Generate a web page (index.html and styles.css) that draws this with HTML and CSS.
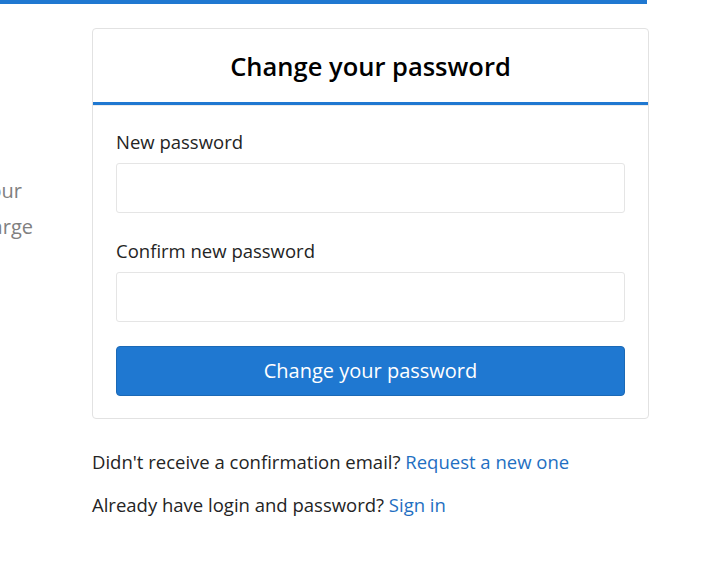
FILE: index.html
```html
<!DOCTYPE html>
<html lang="en">
<head>
    <meta charset="UTF-8">
    <meta name="viewport" content="width=device-width, initial-scale=1.0">
    <title>Change your password</title>
    <link rel="stylesheet" href="styles.css">
</head>
<body>
    <div class="topbar"></div>

    <div class="page">
        <div class="intro">
            <span class="intro-line first">Keep your</span>
            <span class="intro-line">team in charge</span>
        </div>

        <div class="main">
            <div class="card">
                <div class="card-header">
                    <h3>Change your password</h3>
                </div>
                <form class="card-body" id="passwordForm">
                    <div class="form-group">
                        <label for="password">New password</label>
                        <input type="password" id="password">
                    </div>
                    <div class="form-group">
                        <label for="passwordConfirm">Confirm new password</label>
                        <input type="password" id="passwordConfirm">
                    </div>
                    <button type="submit">Change your password</button>
                </form>
            </div>

            <p class="links">Didn't receive a confirmation email? <a href="#">Request a new one</a></p>
            <p class="links">Already have login and password? <a href="#">Sign in</a></p>
        </div>
    </div>
</body>
</html>
```

FILE: styles.css
```css
body {
    font-family: "Open Sans", "Noto Sans", sans-serif;
    font-size: 18.5px;
    line-height: 30px;
    color: #242424;
    background-color: #fff;
    margin: 0;
    padding: 0;
}

.topbar {
    width: 647px;
    height: 4px;
    background-color: #1f78d1;
}

.page {
    display: flex;
    padding-top: 24px;
}

.intro {
    width: 33px;
    display: flex;
    flex-direction: column;
    align-items: flex-end;
    overflow: hidden;
    white-space: nowrap;
    padding-top: 145px;
    color: #808080;
    font-size: 20px;
    line-height: 36px;
}

.intro-line.first {
    margin-right: 11px;
}

.main {
    width: 557px;
    margin-left: 59px;
}

.card {
    border: 1px solid #e2e2e2;
    border-radius: 4px;
}

.card-header {
    height: 73px;
    display: flex;
    align-items: center;
    justify-content: center;
    border-bottom: 3px solid #1f78d1;
}

.card-header h3 {
    margin: 0;
    font-size: 25.5px;
    font-weight: 600;
    color: #000;
}

.card-body {
    border-top: 1px solid #ececec;
    padding: 21px 23px 22px;
}

.form-group {
    margin-bottom: 23px;
}

.form-group label {
    display: block;
    margin-bottom: 6px;
}

input {
    display: block;
    box-sizing: border-box;
    width: 100%;
    height: 50px;
    border: 1px solid #e5e5e5;
    border-radius: 3px;
    padding: 0 12px;
    font: inherit;
}

button {
    display: block;
    width: 100%;
    height: 50px;
    margin-top: 24px;
    border: 1px solid #1b69b6;
    border-radius: 4px;
    background-color: #1f78d1;
    color: #fff;
    font: inherit;
    font-size: 20px;
}

.links {
    margin: 28px 0 0;
}

.links + .links {
    margin-top: 13px;
}

a {
    color: #1f6fc2;
    text-decoration: none;
}
```
